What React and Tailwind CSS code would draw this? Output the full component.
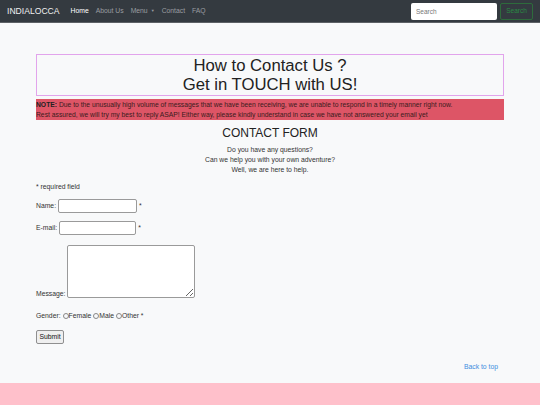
import React from "react";

export default function App() {
  return (
    <div className="w-[540px] h-[405px] bg-[#f8f9fa] flex flex-col overflow-hidden" style={{ fontFamily: '"Liberation Sans", Arial, sans-serif' }}>
      <nav className="h-[23px] bg-[#343a40] border-b border-[#5d6166] flex items-center pl-[7px] pr-[7px] shrink-0">
        <span className="text-[8.6px] text-[#f0f0f0] mr-[11px] leading-none">INDIALOCCA</span>
        <div className="flex items-center gap-[7px] text-[6.8px] leading-none text-[#9a9da1]">
          <span className="text-white">Home</span>
          <span>About Us</span>
          <span className="flex items-center gap-[3px]">Menu <span className="text-[4px]">▼</span></span>
          <span>Contact</span>
          <span>FAQ</span>
        </div>
        <div className="ml-auto flex items-center gap-[3px]">
          <input placeholder="Search" className="w-[86px] h-[17px] bg-white rounded-[2px] px-[5px] text-[6.5px] text-[#555] placeholder-[#777] outline-none" />
          <button className="w-[33px] h-[17px] border border-[#2e6b3c] rounded-[2px] text-[6.5px] text-[#2a8a44]">Search</button>
        </div>
      </nav>
      <main className="flex-1 px-[36px] pt-[31px] text-[#333]">
        <div className="border border-[#e2a4ec] h-[42px] flex flex-col items-center justify-center text-[16.7px] leading-[19px] text-[#222]">
          <div>How to Contact Us ?</div>
          <div>Get in TOUCH with US!</div>
        </div>
        <div className="mt-[3px] bg-[#dd5566] h-[21px] px-0 flex flex-col justify-center text-[6.75px] leading-[10px] text-[#3a1c20]">
          <div><b className="text-[#222]">NOTE:</b> Due to the unusually high volume of messages that we have been receiving, we are unable to respond in a timely manner right now.</div>
          <div>Rest assured, we will try my best to reply ASAP! Either way, please kindly understand in case we have not answered your email yet</div>
        </div>
        <div className="mt-[6px] text-center text-[12px] leading-[15px] text-[#222]">CONTACT FORM</div>
        <div className="mt-[4px] text-center text-[6.8px] leading-[10px] text-[#333]">
          <div>Do you have any questions?</div>
          <div>Can we help you with your own adventure?</div>
          <div>Well, we are here to help.</div>
        </div>
        <div className="mt-[7px] text-[6.8px] leading-[10px]">* required field</div>
        <div className="mt-[7px] flex items-center text-[6.8px] h-[14px]">
          <span>Name:</span>
          <input className="ml-[2px] w-[79px] h-[14px] bg-white border border-[#9a9a9a] rounded-[2px]" />
          <span className="ml-[2px]">*</span>
        </div>
        <div className="mt-[8px] flex items-center text-[6.8px] h-[14px]">
          <span>E-mail:</span>
          <input className="ml-[2px] w-[77px] h-[14px] bg-white border border-[#9a9a9a] rounded-[2px]" />
          <span className="ml-[2px]">*</span>
        </div>
        <div className="mt-[10px] flex items-end text-[6.8px]">
          <span className="leading-[8px]">Message:</span>
          <textarea className="ml-[2px] w-[128px] h-[53px] bg-white border border-[#9a9a9a] rounded-[2px] resize-y" />
        </div>
        <div className="mt-[13px] flex items-center text-[6.8px] leading-[10px]">
          <span>Gender:</span>
          <span className="ml-[2px] inline-block w-[6px] h-[6px] rounded-full border border-[#888]" />
          <span>Female</span>
          <span className="ml-[2px] inline-block w-[6px] h-[6px] rounded-full border border-[#888]" />
          <span>Male</span>
          <span className="ml-[2px] inline-block w-[6px] h-[6px] rounded-full border border-[#888]" />
          <span>Other *</span>
        </div>
        <button className="mt-[9px] w-[28px] h-[14px] bg-[#efefef] border border-[#8f8f8f] rounded-[2px] text-[6.8px] text-[#111]">Submit</button>
        <div className="mt-[16px] flex justify-end pr-[6px]">
          <span className="text-[6.8px] text-[#3d8ee0]">Back to top</span>
        </div>
      </main>
      <footer className="h-[22px] bg-[#ffc0cb] shrink-0" />
    </div>
  );
}
